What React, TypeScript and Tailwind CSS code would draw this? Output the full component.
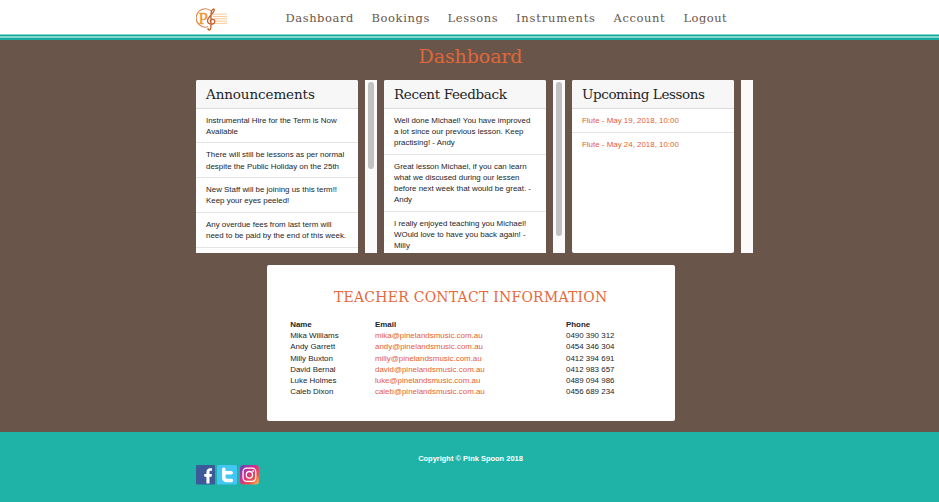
import React from "react";

const slab = "font-['DejaVu_Serif',serif]";

const navItems = [
  { label: "Dashboard", style: "w-[86px] tracking-[0.55px]" },
  { label: "Bookings", style: "w-[76px] tracking-[0.6px]" },
  { label: "Lessons", style: "w-[68.5px] tracking-[0.6px]" },
  { label: "Instruments", style: "w-[97.5px] tracking-[0.8px]" },
  { label: "Account", style: "w-[70px] tracking-[0.6px]" },
  { label: "Logout", style: "w-[50px] tracking-[0.45px]" },
];

const announcements = [
  ["Instrumental Hire for the Term is Now", "Available"],
  ["There will still be lessons as per normal", "despite the Public Holiday on the 25th"],
  ["New Staff will be joining us this term!!", "Keep your eyes peeled!"],
  ["Any overdue fees from last term will", "need to be paid by the end of this week."],
  [""],
];

const feedback = [
  ["Well done Michael! You have improved", "a lot since our previous lesson. Keep", "practising! - Andy"],
  ["Great lesson Michael, if you can learn", "what we discused during our lessen", "before next week that would be great. -", "Andy"],
  ["I really enjoyed teaching you Michael!", "WOuld love to have you back again! -", "Milly"],
];

const lessons = [["Flute - May 19, 2018, 10:00"], ["Flute - May 24, 2018, 10:00"]];

const teachers = [
  ["Mika Williams", "mika@pinelandsmusic.com.au", "0490 390 312"],
  ["Andy Garrett", "andy@pinelandsmusic.com.au", "0454 346 304"],
  ["Milly Buxton", "milly@pinelandsmusic.com.au", "0412 394 691"],
  ["David Bernal", "david@pinelandsmusic.com.au", "0412 983 657"],
  ["Luke Holmes", "luke@pinelandsmusic.com.au", "0489 094 986"],
  ["Caleb Dixon", "caleb@pinelandsmusic.com.au", "0456 689 234"],
];

function Logo() {
  return (
    <svg className="h-[24px] w-[32px]" viewBox="0 0 32 24" fill="none">
      <path d="M17 7.2h14M17 9.5h14M18 11.8h13M19 14.1h12M19 16.3h12" stroke="#fcc48a" strokeWidth=".9" />
      <path d="M15.6 4.2A9.2 9.2 0 1 0 12 19.8" stroke="#d98659" strokeWidth="1.1" />
      <text x="2.6" y="16.8" fontSize="17" fill="#f7931e" stroke="#f7931e" strokeWidth=".3" fontFamily="Liberation Serif, serif">P</text>
      <path
        d="M14.9 20.6c-.1 3.2-3.3 2.9-2.8.9M14.9 20.6 15 7.2c.1-3.2 2.4-6.4 3.2-4.9.7 3.9-6.4 7.4-6.7 11.3-.1 4.6 7.2 4.6 7.3 1.1.1-3.5-4.8-3.3-4.4-.2"
        stroke="#c65f28"
        strokeWidth="1.3"
        strokeLinecap="round"
      />
    </svg>
  );
}

function Panel({ title, spacing, items, link }: { title: string; spacing: string; items: string[][]; link?: boolean }) {
  return (
    <div className={`h-[173px] w-[162px] shrink-0 overflow-hidden bg-white ${link ? "rounded-[2px]" : "rounded-t-[2px]"}`}>
      <h2 className={`h-[28.5px] border-b border-[#dcdcdc] bg-[#f7f7f7] pl-[10px] text-[13.5px] leading-[29px] whitespace-nowrap text-[#212529] ${spacing} ${slab}`}>
        {title}
      </h2>
      <ul>
        {items.map((lines, i) => (
          <li
            key={i}
            className={`px-[10px] pt-[6px] whitespace-nowrap ${i < items.length - 1 ? "border-b border-[#e4e4e4]" : ""} ${link ? "pb-[5.9px] text-[#e5602f]" : "pb-[5.4px]"}`}
          >
            {lines.map((line) => (
              <div key={line}>{line}</div>
            ))}
          </li>
        ))}
      </ul>
    </div>
  );
}

function Track({ thumb }: { thumb?: string }) {
  return (
    <div className="ml-[7px] h-[173px] w-[11.5px] shrink-0 bg-[#fafafa] pt-[2px] pl-[3px]">
      {thumb && <div className={`w-[6px] rounded-full bg-[#c1c1c1] ${thumb}`} />}
    </div>
  );
}

function Socials() {
  return (
    <div className="flex gap-[2px]">
      <svg className="h-[20px] w-[19px]" viewBox="0 0 20 20" preserveAspectRatio="none">
        <rect width="20" height="19.5" rx="1" fill="#3c5a99" />
        <path d="M11 18.5v-6.8H8.7V9H11V7c0-2.5 1.6-3.8 3.9-3.8l2 .1v2.4h-1.4c-1.1 0-1.3.6-1.3 1.4V9h2.6l-.4 2.7h-2.2v6.8z" fill="#fff" />
      </svg>
      <svg className="h-[20px] w-[20px]" viewBox="0 0 20 20">
        <rect width="20" height="19.5" rx="1.5" fill="#43c6f3" />
        <path d="M6.8 4.2v8c0 2.2 1.2 3.4 3.4 3.4h4.2M6.8 7.8h7.4" stroke="#fff" strokeWidth="3.5" strokeLinecap="round" fill="none" />
      </svg>
      <svg className="ml-px h-[20px] w-[19px]" viewBox="0 0 20 20" preserveAspectRatio="none">
        <defs>
          <linearGradient id="insta" x1="0" y1="0" x2="1" y2="1">
            <stop offset="0" stopColor="#6540c4" />
            <stop offset=".45" stopColor="#d92f87" />
            <stop offset=".72" stopColor="#ed5548" />
            <stop offset="1" stopColor="#fbc45d" />
          </linearGradient>
        </defs>
        <rect width="20" height="19.5" rx="3.5" fill="url(#insta)" />
        <g fill="none" stroke="#fff" strokeWidth="1.3">
          <rect x="3.2" y="3.2" width="13.4" height="13.2" rx="3.8" />
          <circle cx="9.9" cy="9.8" r="3.3" />
        </g>
        <circle cx="13.8" cy="6" r=".9" fill="#fff" />
      </svg>
    </div>
  );
}

export default function App() {
  return (
    <div className="flex h-[502px] w-[939px] flex-col overflow-hidden bg-[#695549] font-['Liberation_Sans',Arial,sans-serif] text-[7.93px] leading-[11.2px] text-[#212529]">
      <header className="flex h-[34px] shrink-0 bg-white pl-[196px]">
        <div className="w-[89.5px] pt-[7px]">
          <Logo />
        </div>
        <nav className={`flex text-[11.5px] leading-[36px] whitespace-nowrap text-[#695549] ${slab}`}>
          {navItems.map((item) => (
            <a key={item.label} className={item.style}>
              {item.label}
            </a>
          ))}
        </nav>
      </header>
      <div className="h-px shrink-0 bg-[#83d5cd]" />
      <div className="h-px shrink-0 bg-[#12a99d]" />
      <div className="h-[2px] shrink-0 bg-[#83d5cd]" />
      <div className="h-[2px] shrink-0 bg-[#16aca0]" />

      <main className="h-[392px] shrink-0">
        <h1 className={`h-[40px] pl-[2px] text-center text-[19px] leading-[33px] tracking-[-0.1px] text-[#e0673a] ${slab}`}>Dashboard</h1>
        <div className="flex pl-[196px]">
          <div className="flex w-[188px]">
            <Panel title="Announcements" spacing="tracking-[-0.1px]" items={announcements} />
            <Track thumb="h-[87px]" />
          </div>
          <div className="flex w-[188px]">
            <Panel title="Recent Feedback" spacing="tracking-[-0.35px]" items={feedback} />
            <Track thumb="h-[154px]" />
          </div>
          <div className="flex w-[188px]">
            <Panel title="Upcoming Lessons" spacing="tracking-[-0.4px]" items={lessons} link />
            <Track />
          </div>
        </div>
        <section className="mt-[12px] ml-[266.5px] h-[156px] w-[408.5px] rounded-[2px] bg-white pt-[22px]">
          <h2 className="h-[32px] text-center font-['DejaVu_Serif_Condensed','DejaVu_Serif',serif] text-[15.5px] leading-[21px] tracking-[0.28px] whitespace-nowrap text-[#e5693c]">
            TEACHER CONTACT INFORMATION
          </h2>
          <div className="grid grid-cols-[84.8px_191px_auto] pl-[23.7px]">
            <b>Name</b>
            <b>Email</b>
            <b>Phone</b>
            {teachers.map(([name, email, phone]) => (
              <React.Fragment key={name}>
                <span>{name}</span>
                <a className="text-[#e5602f]">{email}</a>
                <span>{phone}</span>
              </React.Fragment>
            ))}
          </div>
        </section>
      </main>

      <footer className="h-[70px] shrink-0 bg-[#1fb3a7] pt-[21px]">
        <p className="h-[12px] pl-[2px] text-center text-[7.47px] font-bold text-white">Copyright © Pink Spoon 2018</p>
        <div className="pl-[196px]">
          <Socials />
        </div>
      </footer>
    </div>
  );
}
